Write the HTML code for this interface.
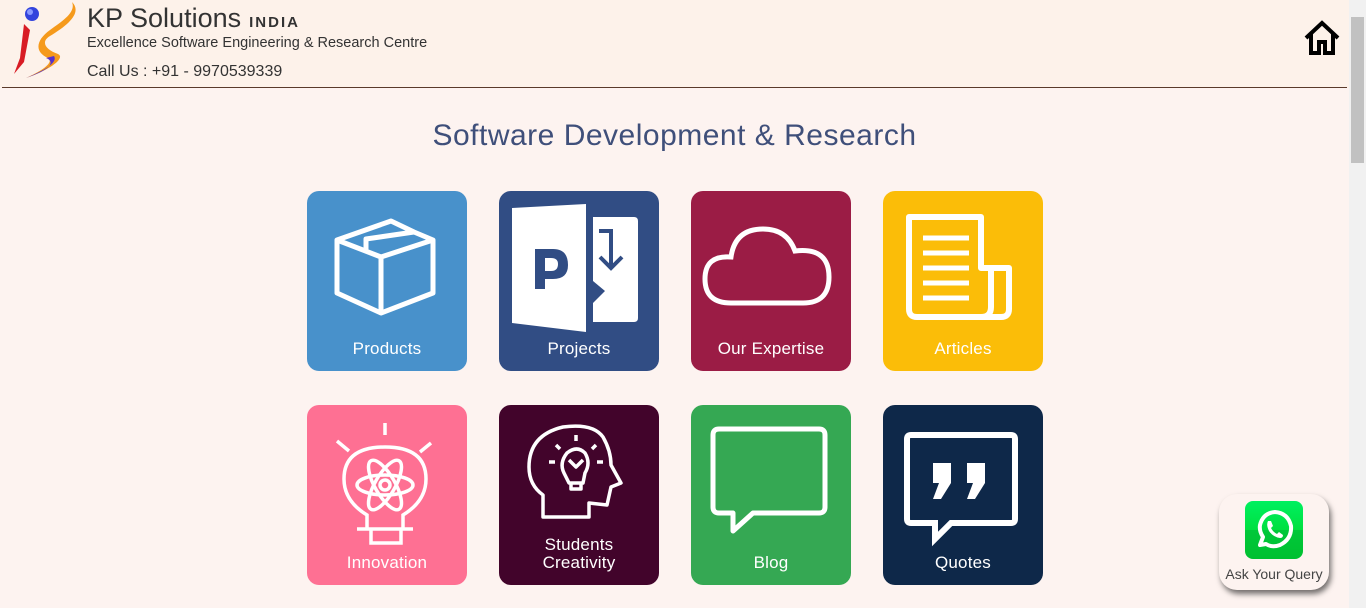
<!DOCTYPE html>
<html><head><meta charset="utf-8"><style>
*{margin:0;padding:0;box-sizing:border-box}
body{width:1366px;height:608px;overflow:hidden;background:#fdf3f0;font-family:"Liberation Sans",Arial,sans-serif;position:relative}
.hdr{position:absolute;left:0;top:0;width:1349px;height:88px;background:#fdf2ea}
.hdr .line{position:absolute;left:2px;top:87px;width:1345px;height:1px;background:#5a3a2a}
.t1{position:absolute;left:87px;top:3px;font-size:27px;color:#333}
.t1 b{font-size:15px;letter-spacing:2px;margin-left:8px;font-weight:bold;color:#333}
.t2{position:absolute;left:87px;top:35px;font-size:14.5px;color:#333}
.t3{position:absolute;left:87px;top:63px;font-size:16px;color:#333}
h1{position:absolute;left:0;width:1349px;top:119px;text-align:center;font-weight:normal;font-size:30px;color:#3f4f7a;letter-spacing:.5px}
.tile{position:absolute;width:160px;height:180px;border-radius:12px;color:#fff;text-align:center}
.tile span{position:absolute;left:0;right:0;bottom:13px;font-size:17px;line-height:18px;letter-spacing:.2px}
.tile svg{position:absolute;left:0;top:0}
.sb{position:absolute;left:1349px;top:0;width:17px;height:608px;background:#f1f1f1}
.sb .th{position:absolute;left:2px;top:17px;width:13px;height:146px;background:#c1c1c1}
.wa{position:absolute;left:1219px;top:494px;width:110px;height:96px;border-radius:18px;background:#fdf3f0;box-shadow:2px 4px 6px rgba(0,0,0,.55)}
.wa .ic{position:absolute;left:26px;top:7px;width:58px;height:58px;border-radius:8px;background:linear-gradient(#00f060 0,#00e040 50%,#00c83a 50%,#00c030 100%)}
.wa span{position:absolute;left:0;right:0;top:72px;font-size:14px;color:#444;text-align:center}
</style></head><body>
<div class="hdr">
<svg style="position:absolute;left:10px;top:0" width="70" height="80" viewBox="0 0 70 80">
<path d="M14 24 L10 58 L4 74 L14 62 L20 30 Z" fill="#d81c24"/>
<path d="M62 2 C72 12 60 24 40 36 C30 42 36 50 48 54 C56 58 40 70 16 78 C34 70 44 62 38 58 C24 52 26 40 40 30 C54 20 66 12 62 2 Z" fill="#f59a1c"/>
<path d="M36 58 C46 62 40 70 16 78 C36 70 48 62 44 56 Z" fill="#5533cc"/>
<circle cx="22" cy="14" r="7" fill="#3344dd"/><circle cx="20" cy="12" r="3" fill="#8899ff"/>
</svg>
<div class="t1">KP Solutions<b>INDIA</b></div>
<div class="t2">Excellence Software Engineering &amp; Research Centre</div>
<div class="t3">Call Us : +91 - 9970539339</div>
<svg style="position:absolute;left:1303px;top:20px" width="38" height="36" viewBox="0 0 38 36"><path d="M3 18 L19 3 L35 18 M8 14 V33 H16 V22 H22 V33 H30 V14" fill="none" stroke="#000" stroke-width="4" stroke-linejoin="miter"/></svg>
<div class="line"></div>
</div>
<h1>Software Development &amp; Research</h1>

<div class="tile" style="left:307px;top:191px;background:#4891cb">
<svg width="160" height="180" fill="none" stroke="#fff" stroke-width="5" stroke-linejoin="round" stroke-linecap="round"><path d="M84 30 L30 49 V102 L74 122 L126 102 V49 L107 41 Z M30 49 L74 66 L126 49 M74 66 V122 M59 58 V48 L107 41"/></svg>
<span>Products</span></div>

<div class="tile" style="left:499px;top:191px;background:#314d84">
<svg width="160" height="180"><path d="M13 17 L87 13 V141 L13 132 Z" fill="#fff"/><path d="M94 26 H135 Q139 26 139 30 V127 Q139 131 135 131 H94 V112 L106 100 L94 90 Z" fill="#fff"/><path d="M36 98 V58 H54 Q69 58 69 74 Q69 88 54 88 H46 V98 Z M46 67 V80 H52 Q59 80 59 73 Q59 67 52 67 Z" fill="#314d84"/><path d="M100 40 H112 V75 M101 66 L112 77 L123 66" fill="none" stroke="#314d84" stroke-width="4"/></svg>
<span>Projects</span></div>

<div class="tile" style="left:691px;top:191px;background:#9b1c45">
<svg width="160" height="180" fill="none" stroke="#fff" stroke-width="5"><path d="M40 112 Q14 112 14 88 Q14 64 40 66 Q44 38 72 38 Q96 38 104 60 Q138 56 138 86 Q138 112 112 112 Z"/></svg>
<span>Our Expertise</span></div>

<div class="tile" style="left:883px;top:191px;background:#fbbd08">
<svg width="160" height="180" fill="none" stroke="#fff" stroke-width="6" stroke-linejoin="round"><path d="M26 26 H98 V77 H126 V118 Q126 126 118 126 H34 Q26 126 26 118 Z M98 126 Q108 126 108 116 V77"/><path d="M40 47 H86 M40 62 H86 M40 77 H86 M40 92 H86 M40 107 H86" stroke-width="5"/></svg>
<span>Articles</span></div>

<div class="tile" style="left:307px;top:405px;background:#fe7093">
<svg width="160" height="180" fill="none" stroke="#fff" stroke-width="3.5"><path d="M78 18 V30 M30 36 L42 46 M124 38 L113 47"/><path d="M60 124 V110 Q37 96 37 74 Q37 42 78 42 Q119 42 119 74 Q119 96 96 110 V124 Z M50 124 H106 M64 124 V138 H94 V124"/><ellipse cx="78" cy="80" rx="28" ry="10"/><ellipse cx="78" cy="80" rx="28" ry="10" transform="rotate(60 78 80)"/><ellipse cx="78" cy="80" rx="28" ry="10" transform="rotate(-60 78 80)"/><circle cx="78" cy="80" r="5"/></svg>
<span>Innovation</span></div>

<div class="tile" style="left:499px;top:405px;background:#42042b">
<svg width="160" height="180" fill="none" stroke="#fff" stroke-width="3.5" stroke-linejoin="round"><path d="M44 112 V90 Q30 80 30 62 Q30 30 64 22 Q94 18 104 32 Q112 46 112 60 L122 78 L112 82 L108 100 L90 98 V112 Z"/><path d="M65 68 Q60 58 68 48 Q78 40 86 48 Q92 58 86 68 L84 78 H70 Z M72 78 V84 H82 V78 M70 55 L77 62 L84 55"/><path d="M77 30 V36 M57 40 L61 44 M97 40 L93 44 M50 57 H56 M104 57 H98"/></svg>
<span style="bottom:13px">Students<br>Creativity</span></div>

<div class="tile" style="left:691px;top:405px;background:#35a853">
<svg width="160" height="180" fill="none" stroke="#fff" stroke-width="5" stroke-linejoin="round"><path d="M28 24 H128 Q134 24 134 30 V102 Q134 108 128 108 H62 L42 126 V108 H28 Q22 108 22 102 V30 Q22 24 28 24 Z"/></svg>
<span>Blog</span></div>

<div class="tile" style="left:883px;top:405px;background:#0e2849">
<svg width="160" height="180"><path d="M28 30 H128 Q132 30 132 34 V114 Q132 118 128 118 H68 L52 134 V118 H28 Q24 118 24 114 V34 Q24 30 28 30 Z" fill="none" stroke="#fff" stroke-width="6"/><path d="M50 58 H68 V78 L58 94 H50 L56 78 H50 Z M84 58 H102 V78 L92 94 H84 L90 78 H84 Z" fill="#fff"/></svg>
<span>Quotes</span></div>

<div class="wa"><div class="ic"><svg width="58" height="58" viewBox="0 0 58 58"><path d="M15 44 L18 36 Q14 30 15 24 Q18 12 30 11 Q43 12 46 25 Q47 38 35 44 Q27 47 21 43 Z" fill="none" stroke="#fff" stroke-width="4" stroke-linejoin="round"/><path d="M23 20 Q21 24 24 30 Q28 36 35 37 Q38 37 38 34 L34 31 L32 33 Q28 31 26 27 L28 25 L26 20 Z" fill="#fff"/></svg></div><span>Ask Your Query</span></div>

<div class="sb"><div class="th"></div></div>
</body></html>
